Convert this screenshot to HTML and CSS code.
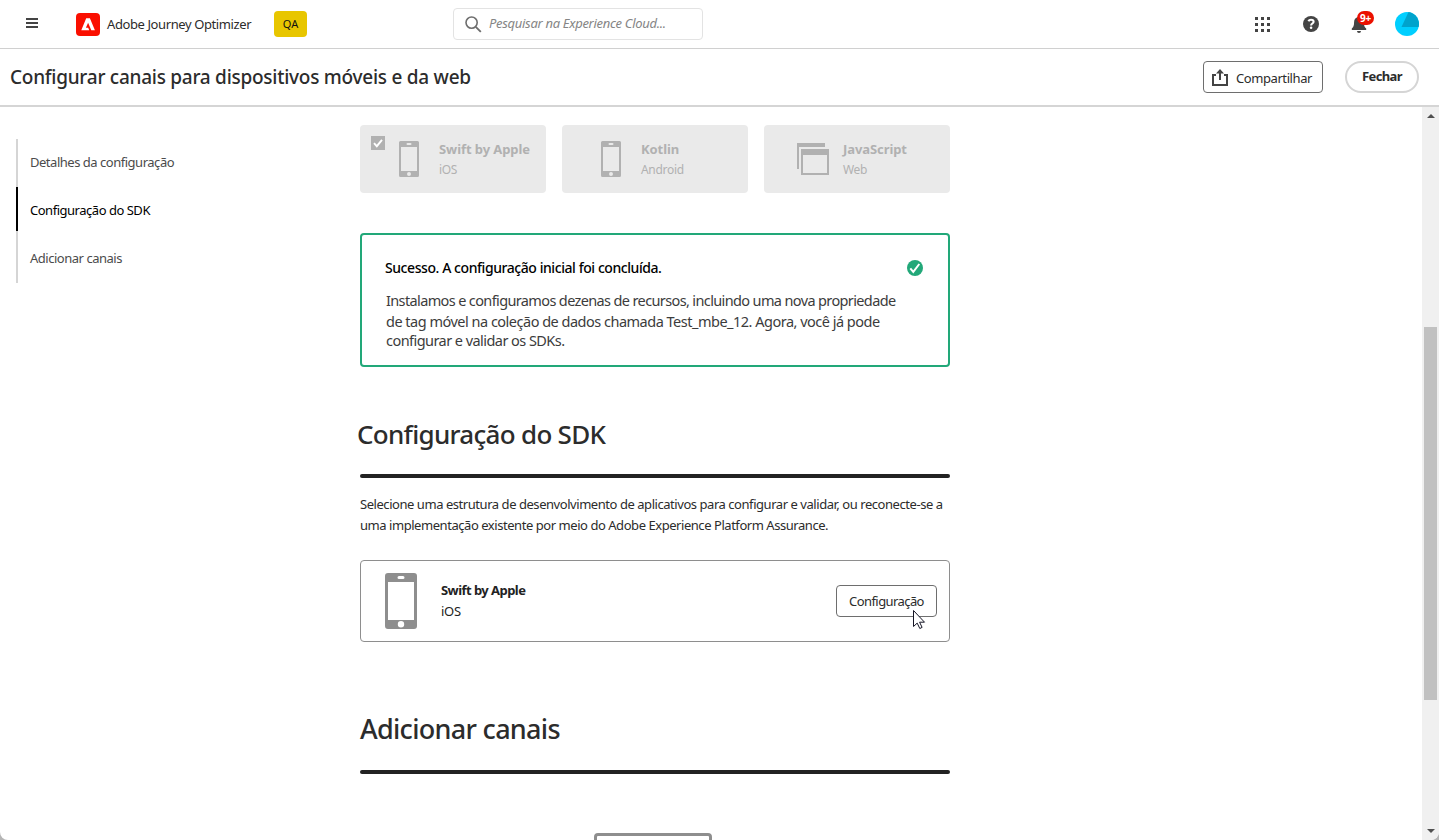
FILE: index.html
```
<!DOCTYPE html>
<html lang="pt-BR">
<head>
<meta charset="utf-8">
<title>Adobe Journey Optimizer</title>
<link rel="stylesheet" href="styles.css">
</head>
<body>
<svg class="sprite" aria-hidden="true">
  <symbol id="phone" viewBox="0 0 32 56">
    <path fill-rule="evenodd" d="M3 0h26a3 3 0 0 1 3 3v50a3 3 0 0 1-3 3H3a3 3 0 0 1-3-3V3a3 3 0 0 1 3-3zM3 9v38h26V9zM14 3a1.500 1.500 0 0 0 0 3h4a1.500 1.500 0 0 0 0-3zM16 48a3.200 3.200 0 1 0 0 6.400 3.200 3.200 0 0 0 0-6.400z"/>
  </symbol>
  <symbol id="phone-small" viewBox="0 0 20 36">
    <path fill-rule="evenodd" d="M1.500 0h17A1.500 1.500 0 0 1 20 1.500v33a1.500 1.500 0 0 1-1.500 1.500h-17A1.500 1.500 0 0 1 0 34.500v-33A1.500 1.500 0 0 1 1.500 0zM2 6v24h16V6zM8.500 2a1 1 0 0 0 0 2h3a1 1 0 0 0 0-2zM10 31a2 2 0 1 0 0 4 2 2 0 0 0 0-4z"/>
  </symbol>
</svg>

<header class="topbar">
  <svg class="menu" width="12" height="10" viewBox="0 0 12 10"><path fill="#444" d="M0 0h12v2H0zM0 4h12v2H0zM0 8h12v2H0z"/></svg>
  <svg class="logo" width="24" height="23" viewBox="0 0 24 23"><rect width="24" height="23" rx="4" fill="#fa0f00"/><path fill="#fff" d="M10.200 5.300h3.700L18.900 17.200h-3.600L12.100 9.700 9.900 14.700h2.300l1 2.500H5.300z"/></svg>
  <span class="product">Adobe Journey Optimizer</span>
  <span class="env">QA</span>
  <div class="search">
    <svg width="17" height="17" viewBox="0 0 17 17" fill="none" stroke="#6e6e6e"><circle cx="6.600" cy="6.600" r="5.600" stroke-width="1.600"/><path d="m10.800 10.800 5 5" stroke-width="1.900"/></svg>
    <span class="placeholder">Pesquisar na Experience Cloud...</span>
  </div>
  <div class="tools">
    <svg width="15" height="15" viewBox="0 0 15 15"><path fill="#444" d="M0 0h3v3H0zM6 0h3v3H6zM12 0h3v3h-3zM0 6h3v3H0zM6 6h3v3H6zM12 6h3v3h-3zM0 12h3v3H0zM6 12h3v3H6zM12 12h3v3h-3z"/></svg>
    <svg width="16" height="16" viewBox="0 0 16 16"><circle cx="8" cy="8" r="8" fill="#444"/><path d="M5.400 5.200C5.800 4.300 6.800 3.700 8 3.700c1.600 0 2.600.8 2.600 2 0 1.700-2.500 1.900-2.500 3.700" fill="none" stroke="#fff" stroke-width="2.100"/><circle cx="8.100" cy="11.800" r="1.300" fill="#fff"/></svg>
    <span class="bell">
      <svg width="16" height="18" viewBox="0 0 16 18"><path fill="#444" d="M7 1.500a1 1 0 0 1 2 0v.6c2.500.5 3.900 2.500 3.900 5 0 4 .8 5.200 2.300 6.300V15H.8v-1.600C2.300 12.300 3.100 11 3.100 7.100c0-2.500 1.400-4.500 3.900-5zM6 16h4a2 2 0 0 1-4 0z"/></svg>
      <span class="badge">9+</span>
    </span>
    <svg width="24" height="24" viewBox="0 0 24 24"><circle cx="12" cy="12" r="12" fill="#00cfff"/><path fill="#00a3cc" d="M13.500.1A12 12 0 0 1 23.600 15L6.500 15z"/></svg>
  </div>
</header>

<div class="titlebar">
  <h1 class="title">Configurar canais para dispositivos móveis e da web</h1>
  <button class="btn share"><svg width="16" height="17" viewBox="0 0 16 17"><path fill="#444" d="M8 0l4 4.500H9V11H7V4.500H4zM0 5h4v2H2v8h12V7h-2V5h4v12H0z"/></svg><span>Compartilhar</span></button>
  <button class="close">Fechar</button>
</div>

<div class="page">
  <nav class="steps">
    <a class="step first">Detalhes da configuração</a>
    <a class="step current">Configuração do SDK</a>
    <a class="step last">Adicionar canais</a>
  </nav>

  <main class="content">
    <div class="platforms">
      <div class="platform">
        <svg class="check" width="14" height="14" viewBox="0 0 14 14"><path fill="#b1b1b1" d="M0 0h14v14H0z"/><path d="m3 7.200 2.800 3L11 3.800" fill="none" stroke="#fff" stroke-width="1.900"/></svg>
        <svg class="device" width="20" height="36"><use href="#phone-small"/></svg>
        <div><div class="pname">Swift by Apple</div><div class="pos">iOS</div></div>
      </div>
      <div class="platform">
        <svg class="device" width="20" height="36"><use href="#phone-small"/></svg>
        <div><div class="pname">Kotlin</div><div class="pos">Android</div></div>
      </div>
      <div class="platform web">
        <svg class="device" width="32" height="32" viewBox="0 0 32 32"><path fill-rule="evenodd" d="M0 0h28v4H2v22H0zM4 6h28v26H4zM6 12v18h24V12z"/></svg>
        <div><div class="pname">JavaScript</div><div class="pos">Web</div></div>
      </div>
    </div>

    <section class="success">
      <div class="success-head"><strong>Sucesso. A configuração inicial foi concluída.</strong>
        <svg width="16" height="16" viewBox="0 0 16 16"><circle cx="8" cy="8" r="8" fill="#22a879"/><path d="m3.300 8.300 3 3.500 6-7.800" fill="none" stroke="#fff" stroke-width="2"/></svg>
      </div>
      <p><span class="l1">Instalamos e configuramos dezenas de recursos, incluindo uma nova propriedade</span><span class="l2">de tag móvel na coleção de dados chamada Test_mbe_12. Agora, você já pode</span><span class="l3">configurar e validar os SDKs.</span></p>
    </section>

    <h2 class="sdk-title">Configuração do SDK</h2>
    <hr class="rule">
    <p class="intro"><span>Selecione uma estrutura de desenvolvimento de aplicativos para configurar e validar, ou reconecte-se a</span><span>uma implementação existente por meio do Adobe Experience Platform Assurance.</span></p>

    <section class="sdk">
      <svg width="32" height="56"><use href="#phone"/></svg>
      <div class="sdk-text"><div class="sdk-name">Swift by Apple</div><div class="sdk-os">iOS</div></div>
      <button class="btn setup"><span>Configuração</span>
        <svg class="cursor" width="14" height="21" viewBox="0 0 14 21"><path fill="#fff" stroke="#151525" d="M1.500 1.500v16l3.700-3.400 2.600 5.400 2.300-1.100-2.500-5.200h4.900z"/></svg>
      </button>
    </section>

    <h2 class="channels-title">Adicionar canais</h2>
    <hr class="rule">
    <div class="channel"></div>
  </main>

  <div class="scrollbar">
    <svg class="arrow" width="8" height="4" viewBox="0 0 8 4"><path fill="#505050" d="M4 0l4 4H0z"/></svg>
    <div class="thumb"></div>
    <svg class="arrow" width="8" height="4" viewBox="0 0 8 4"><path fill="#505050" d="M0 0h8L4 4z"/></svg>
  </div>
</div>
</body>
</html>
```
FILE: styles.css
```
* { box-sizing: border-box; }
html { background: #b5b5b5; }
body {
  margin: 0;
  height: 840px;
  overflow: hidden;
  display: flex;
  flex-direction: column;
  background: #fff;
  border-radius: 0 0 8px 8px;
  color: #2c2c2c;
  font: 13px/20px "Noto Sans", sans-serif;
  white-space: nowrap;
}
h1, h2, p { margin: 0; font-weight: 500; }
button { font: inherit; color: inherit; background: #fff; padding: 0; }
svg { display: block; flex: none; }
.sprite { display: none; }

.topbar {
  flex: none;
  height: 49px;
  display: flex;
  align-items: center;
  border-bottom: 1px solid #d0d0d0;
  padding: 0 20px 0 26px;
}
.menu { margin: -2px 38px 0 0; }
.product { width: 167px; margin-left: 7px; letter-spacing: -.4px; }
.env {
  width: 33px;
  height: 26px;
  border-radius: 4px;
  background: #e8c600;
  color: #111;
  font-size: 11px;
  line-height: 26px;
  text-align: center;
}
.search {
  width: 250px;
  height: 32px;
  margin-left: 146px;
  padding-left: 11px;
  display: flex;
  align-items: center;
  gap: 7px;
  border: 1px solid #e3e3e3;
  border-radius: 4px;
}
.placeholder { color: #858585; font-style: italic; letter-spacing: -.3px; margin-top: -2px; }
.tools { margin-left: auto; display: flex; align-items: center; }
.tools > :nth-child(2) { margin-left: 33px; }
.tools > :nth-child(3) { margin-left: 32px; }
.tools > :nth-child(4) { margin-left: 28px; }
.bell { position: relative; }
.badge {
  position: absolute;
  left: 6px;
  top: -4px;
  width: 17px;
  height: 14px;
  border-radius: 7px;
  background: #eb1000;
  color: #fff;
  font-size: 10px;
  font-weight: 700;
  line-height: 14px;
  letter-spacing: -.3px;
  text-align: center;
}

.titlebar {
  flex: none;
  height: 58px;
  display: flex;
  align-items: center;
  border-bottom: 2px solid #d5d5d5;
  padding: 0 20px 0 10px;
}
.title { font-size: 19px; line-height: 28px; letter-spacing: -.26px; margin-right: auto; }
.btn {
  height: 32px;
  border: 1px solid #6e6e6e;
  border-radius: 4px;
}
.share {
  width: 120px;
  display: flex;
  align-items: center;
  gap: 8px;
  padding-left: 8px;
  letter-spacing: -.42px;
}
.share span { margin-top: 1px; }
.close {
  width: 74px;
  height: 32px;
  margin-left: 22px;
  padding-bottom: 2px;
  border: 2px solid #d5d5d5;
  border-radius: 16px;
  font-weight: 700;
  letter-spacing: -.6px;
}

.page { flex: 1; min-height: 0; display: flex; overflow: hidden; }
.steps { width: 344px; margin: 32px 0 0 16px; letter-spacing: -.48px; }
.step {
  display: flex;
  align-items: center;
  height: 48px;
  padding-left: 12px;
  border-left: 2px solid #d5d5d5;
  color: #4b4b4b;
}
.step.first { padding-bottom: 2px; }
.step.current { height: 44px; border-color: #000; color: #000; padding-top: 2px; }
.step.last { height: 52px; padding-top: 2px; }

.content { width: 590px; padding-top: 18px; }
.platforms { display: grid; grid-template-columns: repeat(3, 186px); gap: 16px; }
.platform {
  height: 68px;
  display: flex;
  align-items: center;
  gap: 20px;
  padding-left: 39px;
  border-radius: 4px;
  background: #eaeaea;
  color: #b1b1b1;
  position: relative;
}
.web { gap: 14px; padding-left: 33px; }
.device { fill: #b1b1b1; }
.check { position: absolute; left: 11px; top: 11px; }
.pname { font-weight: 700; letter-spacing: -.08px; }
.pos { font-size: 12px; letter-spacing: -.3px; padding-top: 1px; margin-bottom: -1px; }

.success {
  height: 134px;
  margin-top: 40px;
  border: 2px solid #22a879;
  border-radius: 4px;
  padding: 23px 25px 0 23px;
}
.success-head { display: flex; justify-content: space-between; align-items: center; color: #000; }
.success-head strong { font-size: 14px; font-weight: 500; letter-spacing: -.43px; }
.success p { margin: 12px 0 0 1px; font-size: 14.5px; font-weight: 400; color: #3c3c3c; }
.success p span, .intro span { display: block; }
.l1 { letter-spacing: -.63px; line-height: 21px; }
.l2 { letter-spacing: -.5px; line-height: 20px; }
.l3 { letter-spacing: -.55px; line-height: 19px; }

.sdk-title { margin: 47px 0 0 -3px; font-size: 26px; line-height: 40px; letter-spacing: -.7px; }
.rule {
  height: 4px;
  margin: 20px 0 0;
  border: 0;
  border-radius: 2px;
  background: #222;
}
.intro { margin-top: 16px; line-height: 21px; font-weight: 400; letter-spacing: -.45px; }
.sdk {
  height: 82px;
  margin-top: 24px;
  display: flex;
  align-items: center;
  border: 1px solid #8e8e8e;
  border-radius: 4px;
  padding: 0 12px 0 24px;
  fill: #8e8e8e;
}
.sdk-text { margin-left: 24px; line-height: 21px; color: #222; }
.sdk-name { font-weight: 700; letter-spacing: -.55px; }
.sdk-os { letter-spacing: -.3px; }
.setup { width: 101px; margin-left: auto; position: relative; letter-spacing: -.58px; }
.cursor { position: absolute; left: 75px; top: 23px; }
.channels-title { margin-top: 66px; font-size: 27px; line-height: 42px; letter-spacing: -.7px; }
.channel {
  width: 118px;
  height: 60px;
  margin: 59px 0 0 234px;
  border: 3px solid #8e8e8e;
  border-radius: 4px;
}

.scrollbar {
  width: 17px;
  margin-left: auto;
  background: #f0f0f0;
  border-bottom-right-radius: 8px;
  display: flex;
  flex-direction: column;
  align-items: center;
  justify-content: space-between;
  padding: 7px 0;
}
.thumb { width: 13px; height: 373px; background: #c1c1c1; margin-top: 79px; }
```
